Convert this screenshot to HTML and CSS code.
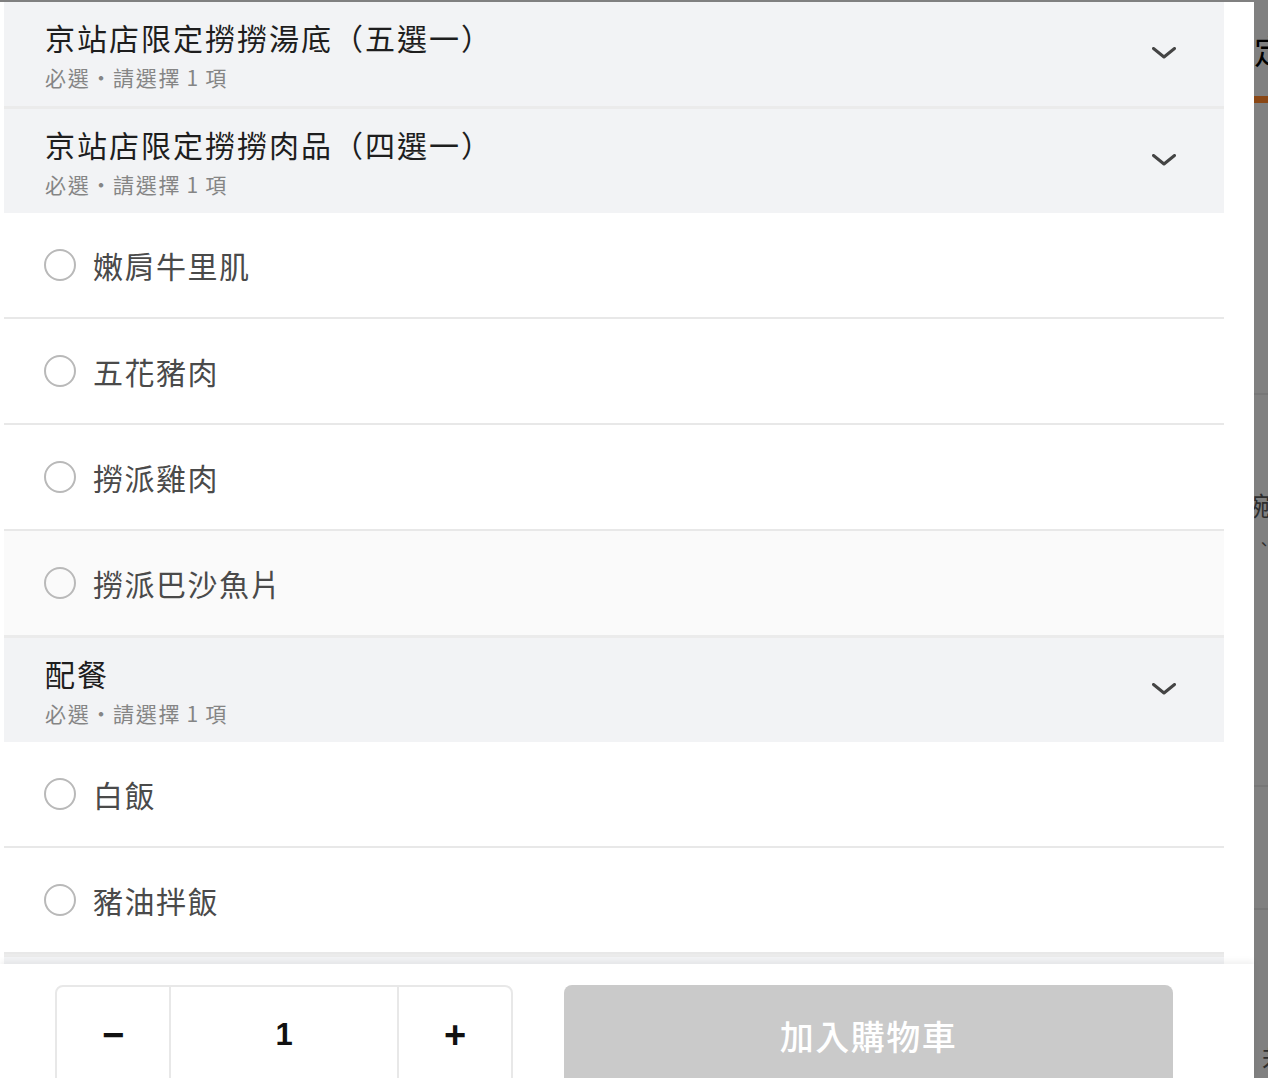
FILE: index.html
```html
<!DOCTYPE html>
<html lang="zh-Hant">
<head>
<meta charset="utf-8">
<title>選項</title>
<link rel="stylesheet" href="styles.css">
</head>
<body>
<div class="screen">
  <div class="modal">
    <div class="list">
      <div class="group-head first">
        <div class="head-text">
          <div class="head-title">京站店限定撈撈湯底（五選一）</div>
          <div class="head-sub">必選・請選擇 1 項</div>
        </div>
        <svg class="chev" viewBox="0 0 24 12" width="24" height="12"><path d="M1.5 1.5 L12 10 L22.5 1.5" fill="none" stroke="#444" stroke-width="3" stroke-linecap="round" stroke-linejoin="round"/></svg>
      </div>
      <div class="group-head">
        <div class="head-text">
          <div class="head-title">京站店限定撈撈肉品（四選一）</div>
          <div class="head-sub">必選・請選擇 1 項</div>
        </div>
        <svg class="chev" viewBox="0 0 24 12" width="24" height="12"><path d="M1.5 1.5 L12 10 L22.5 1.5" fill="none" stroke="#444" stroke-width="3" stroke-linecap="round" stroke-linejoin="round"/></svg>
      </div>
      <div class="option"><span class="radio"></span><span class="opt-label">嫩肩牛里肌</span></div>
      <div class="option"><span class="radio"></span><span class="opt-label">五花豬肉</span></div>
      <div class="option"><span class="radio"></span><span class="opt-label">撈派雞肉</span></div>
      <div class="option hover"><span class="radio"></span><span class="opt-label">撈派巴沙魚片</span></div>
      <div class="group-head">
        <div class="head-text">
          <div class="head-title">配餐</div>
          <div class="head-sub">必選・請選擇 1 項</div>
        </div>
        <svg class="chev" viewBox="0 0 24 12" width="24" height="12"><path d="M1.5 1.5 L12 10 L22.5 1.5" fill="none" stroke="#444" stroke-width="3" stroke-linecap="round" stroke-linejoin="round"/></svg>
      </div>
      <div class="option"><span class="radio"></span><span class="opt-label">白飯</span></div>
      <div class="option"><span class="radio"></span><span class="opt-label">豬油拌飯</span></div>
      <div class="group-head">
        <div class="head-text">
          <div class="head-title">飲品</div>
          <div class="head-sub">必選・請選擇 1 項</div>
        </div>
      </div>
    </div>
    <div class="footer">
      <div class="stepper">
        <button class="step-btn">−</button>
        <div class="qty">1</div>
        <button class="step-btn">+</button>
      </div>
      <button class="add-btn">加入購物車</button>
    </div>
  </div>
  <div class="backdrop">
    <div class="bd-title">定</div>
    <div class="bd-bar"></div>
    <div class="bd-line l1"></div>
    <div class="bd-text">碗</div>
    <div class="bd-mark">、</div>
    <div class="bd-line l2"></div>
    <div class="bd-line l3"></div>
    <div class="bd-foot">若</div>
  </div>
</div>
</body>
</html>
```

FILE: styles.css
```css
* { box-sizing: border-box; }
html, body {
  margin: 0;
  padding: 0;
  width: 1268px;
  height: 1078px;
  overflow: hidden;
  background: #808080;
  font-family: "Noto Sans CJK TC", "Noto Sans", "Liberation Sans", sans-serif;
}
.screen {
  display: flex;
  height: 1078px;
}
.modal {
  width: 1254px;
  margin-top: 2px;
  height: 1076px;
  background: #fff;
  display: flex;
  flex-direction: column;
  flex-shrink: 0;
}
.list {
  flex: 1;
  overflow: hidden;
  padding-left: 4px;
  padding-right: 30px;
}
.group-head {
  background: #f2f3f5;
  height: 107px;
  display: flex;
  align-items: center;
  padding: 0 48px 0 41px;
  border-top: 3px solid #ebebeb;
}
.group-head.first {
  border-top: 0;
  height: 104px;
}
.head-text { flex: 1; }
.head-title {
  font-size: 30px;
  letter-spacing: 2px;
  color: #1e1e1e;
  line-height: 38px;
}
.head-sub {
  font-size: 21px;
  letter-spacing: 1.7px;
  word-spacing: -1px;
  color: #858585;
  line-height: 28px;
  margin-top: 7px;
}
.chev { display: block; margin-top: -2px; }
.option {
  height: 106px;
  display: flex;
  align-items: center;
  padding-left: 40px;
  border-bottom: 2px solid #e8e8e8;
  background: #fff;
}
.option.hover { background: #fafafa; border-bottom: 0; height: 104px; }
.radio {
  width: 32px;
  height: 32px;
  border: 2px solid #b9b9b9;
  border-radius: 50%;
  flex-shrink: 0;
  margin-right: 17px;
}
.opt-label {
  font-size: 30px;
  letter-spacing: 1.5px;
  color: #4a4a4a;
  line-height: 40px;
}
.footer {
  height: 114px;
  flex-shrink: 0;
  background: #fff;
  box-shadow: 0 -3px 6px rgba(0,0,0,0.06);
  position: relative;
  display: flex;
  align-items: flex-start;
  padding: 21px 0 0 55px;
  gap: 51px;
}
.stepper {
  width: 458px;
  height: 110px;
  border: 2px solid #e8e8e8;
  border-radius: 8px;
  display: flex;
}
.step-btn {
  width: 112px;
  border: 0;
  background: transparent;
  font-family: "Liberation Sans", sans-serif;
  font-size: 38px;
  font-weight: bold;
  color: #111;
  padding: 0 0 10px 0;
  display: flex;
  align-items: center;
  justify-content: center;
}
.qty {
  flex: 1;
  border-left: 2px solid #e8e8e8;
  border-right: 2px solid #e8e8e8;
  display: flex;
  align-items: center;
  justify-content: center;
  font-family: "Liberation Sans", sans-serif;
  font-size: 31px;
  font-weight: bold;
  color: #111;
  padding-bottom: 10px;
}
.add-btn {
  width: 609px;
  height: 110px;
  border: 0;
  border-radius: 8px;
  background: #cacaca;
  color: #fff;
  font-family: "Noto Sans CJK TC", sans-serif;
  font-size: 34px;
  font-weight: 500;
  letter-spacing: 1.5px;
  padding: 0 0 10px 0;
  display: flex;
  align-items: center;
  justify-content: center;
}
.backdrop {
  flex: 1;
  background: #808080;
  overflow: hidden;
  display: flex;
  flex-direction: column;
}
.bd-title {
  margin-top: 30px;
  font-size: 33px;
  line-height: 40px;
  color: #000;
  width: 40px;
}
.bd-bar {
  margin-top: 26px;
  height: 7px;
  background: #8a4715;
}
.bd-line {
  height: 2px;
  background: #777;
}
.bd-line.l1 { margin-top: 290px; }
.bd-text {
  margin-top: 95px;
  margin-left: -10px;
  font-size: 26px;
  line-height: 30px;
  color: #2e2e2e;
}
.bd-mark {
  margin-top: 13px;
  margin-left: 2px;
  font-size: 16px;
  line-height: 20px;
  color: #2e2e2e;
}
.bd-line.l2 { margin-top: 232px; }
.bd-line.l3 { margin-top: 121px; }
.bd-foot {
  margin-top: 134px;
  margin-left: 8px;
  font-size: 26px;
  line-height: 30px;
  color: #2e2e2e;
}
```
